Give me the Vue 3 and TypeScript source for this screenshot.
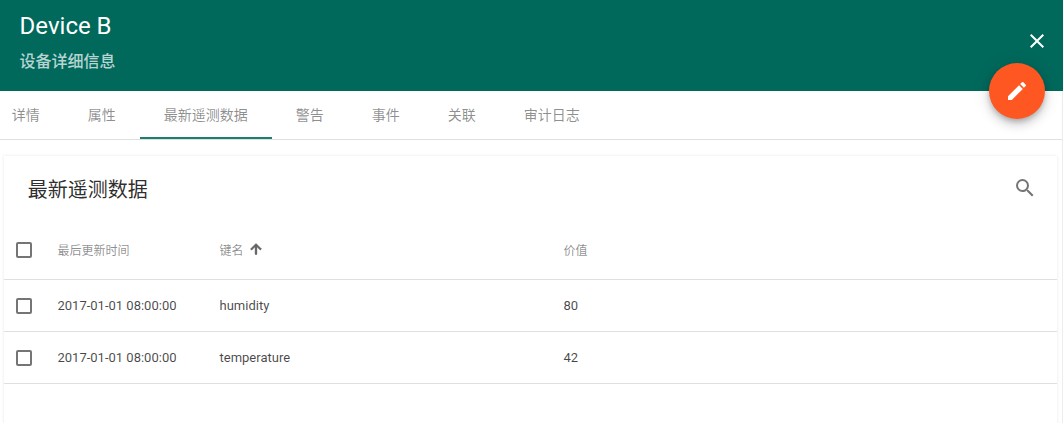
<script setup lang="ts">
const tabs: string[] = ['详情', '属性', '最新遥测数据', '警告', '事件', '关联', '审计日志']
const rows = [
  { ts: '2017-01-01 08:00:00', key: 'humidity', value: '80' },
  { ts: '2017-01-01 08:00:00', key: 'temperature', value: '42' },
]
</script>

<template>
  <div class="page">
    <header class="head">
      <div class="title">Device B</div>
      <div class="subtitle">设备详细信息</div>
      <svg class="close" viewBox="0 0 24 24" width="24" height="24"><path fill="#fff" d="M19 6.41 17.59 5 12 10.59 6.41 5 5 6.41 10.59 12 5 17.59 6.41 19 12 13.41 17.59 19 19 17.59 13.41 12z"/></svg>
      <div class="fab">
        <svg viewBox="0 0 24 24" width="24" height="24"><path fill="#fff" d="M3 17.25V21h3.75L17.81 9.94l-3.75-3.75L3 17.25zM20.71 7.04a1 1 0 0 0 0-1.41l-2.34-2.34a1 1 0 0 0-1.41 0l-1.83 1.83 3.75 3.75 1.83-1.83z"/></svg>
      </div>
    </header>
    <div class="body">
      <nav class="tabs">
        <div v-for="(t, i) in tabs" :key="t" class="tab" :class="{ active: i === 2 }">{{ t }}</div>
      </nav>
      <main class="content">
        <section class="card">
          <div class="toolbar">
            <div class="card-title">最新遥测数据</div>
            <svg viewBox="0 0 24 24" width="24" height="24"><path fill="#757575" d="M15.5 14h-.79l-.28-.27A6.47 6.47 0 0 0 16 9.5 6.5 6.5 0 1 0 9.5 16c1.61 0 3.09-.59 4.23-1.57l.27.28v.79l5 4.99L20.49 19l-4.99-5zm-6 0C7.01 14 5 11.99 5 9.5S7.01 5 9.5 5 14 7.01 14 9.5 11.99 14 9.5 14z"/></svg>
          </div>
          <div class="row head-row">
            <span class="check"></span>
            <span class="c-ts">最后更新时间</span>
            <span class="c-key">键名
              <svg class="sort" viewBox="0 0 24 24" width="16" height="16"><path fill="#616161" stroke="#616161" stroke-width="1.5" d="M4 12l1.41 1.41L11 7.83V20h2V7.83l5.58 5.59L20 12l-8-8-8 8z"/></svg>
            </span>
            <span class="c-val">价值</span>
          </div>
          <div v-for="r in rows" :key="r.key" class="row body-row">
            <span class="check"></span>
            <span class="c-ts">{{ r.ts }}</span>
            <span class="c-key">{{ r.key }}</span>
            <span class="c-val">{{ r.value }}</span>
          </div>
        </section>
      </main>
    </div>
  </div>
</template>

<style>
html, body { margin: 0; height: 100%; overflow: hidden; background: #fff; }
</style>

<style scoped>
.page {
  width: 1063px;
  height: 423px;
  overflow: hidden;
  font-family: Roboto, "Noto Sans CJK SC", sans-serif;
  background: #fff;
}
.head {
  position: relative;
  height: 91px;
  box-sizing: border-box;
  padding: 10px 20px 0 19.6px;
  background: #00695c;
  color: #fff;
}
.title { font-size: 24px; line-height: 32px; font-weight: 400; }
.subtitle { margin-top: 3.5px; font-size: 16px; line-height: 32px; font-weight: 500; color: rgba(255,255,255,.72); }
.close { position: absolute; top: 29px; right: 14px; }
.fab {
  position: absolute;
  top: 63px;
  left: 989px;
  width: 56px;
  height: 56px;
  border-radius: 50%;
  background: #ff5722;
  display: flex;
  align-items: center;
  justify-content: center;
  z-index: 2;
  box-shadow: 0 3px 5px -1px rgba(0,0,0,.2), 0 6px 10px 0 rgba(0,0,0,.14), 0 1px 18px 0 rgba(0,0,0,.12);
}
.body {
  height: 332px;
  box-sizing: border-box;
  border-right: 1px solid #ececec;
}
.tabs {
  display: flex;
  height: 49px;
  box-sizing: border-box;
  border-bottom: 1px solid #e0e0e0;
}
.tab {
  height: 48px;
  box-sizing: border-box;
  padding: 0 24px;
  font-size: 14px;
  font-weight: 400;
  line-height: 48px;
  color: rgba(0,0,0,.46);
}
.tab:first-child { margin-left: -12.3px; }
.tab.active { border-bottom: 2px solid #1a7f71; }
.content { padding: 16px 5px 0 4px; }
.card {
  height: 300px;
  background: #fff;
  box-shadow: 0 0 3px rgba(0,0,0,.1);
}
.toolbar {
  height: 64px;
  display: flex;
  align-items: center;
  justify-content: space-between;
  padding: 0 20px 0 23.7px;
  box-sizing: border-box;
}
.card-title { font-size: 20px; font-weight: 400; color: rgba(0,0,0,.84); }
.row {
  display: flex;
  align-items: center;
  height: 52px;
  box-sizing: border-box;
  border-bottom: 1px solid #e0e0e0;
  font-size: 13px;
  color: rgba(0,0,0,.72);
}
.head-row { height: 60px; font-size: 12px; font-weight: 400; color: rgba(0,0,0,.46); }
.check {
  margin-left: 12px;
  width: 16px;
  height: 16px;
  box-sizing: border-box;
  border: 2px solid #757575;
  border-radius: 2px;
  flex: none;
}
.c-ts { margin-left: 25.5px; width: 162px; flex: none; }
.c-key { width: 344px; flex: none; display: flex; align-items: center; gap: 4px; }
.sort { margin-top: -2px; }
.c-val { flex: 1; }
</style>
